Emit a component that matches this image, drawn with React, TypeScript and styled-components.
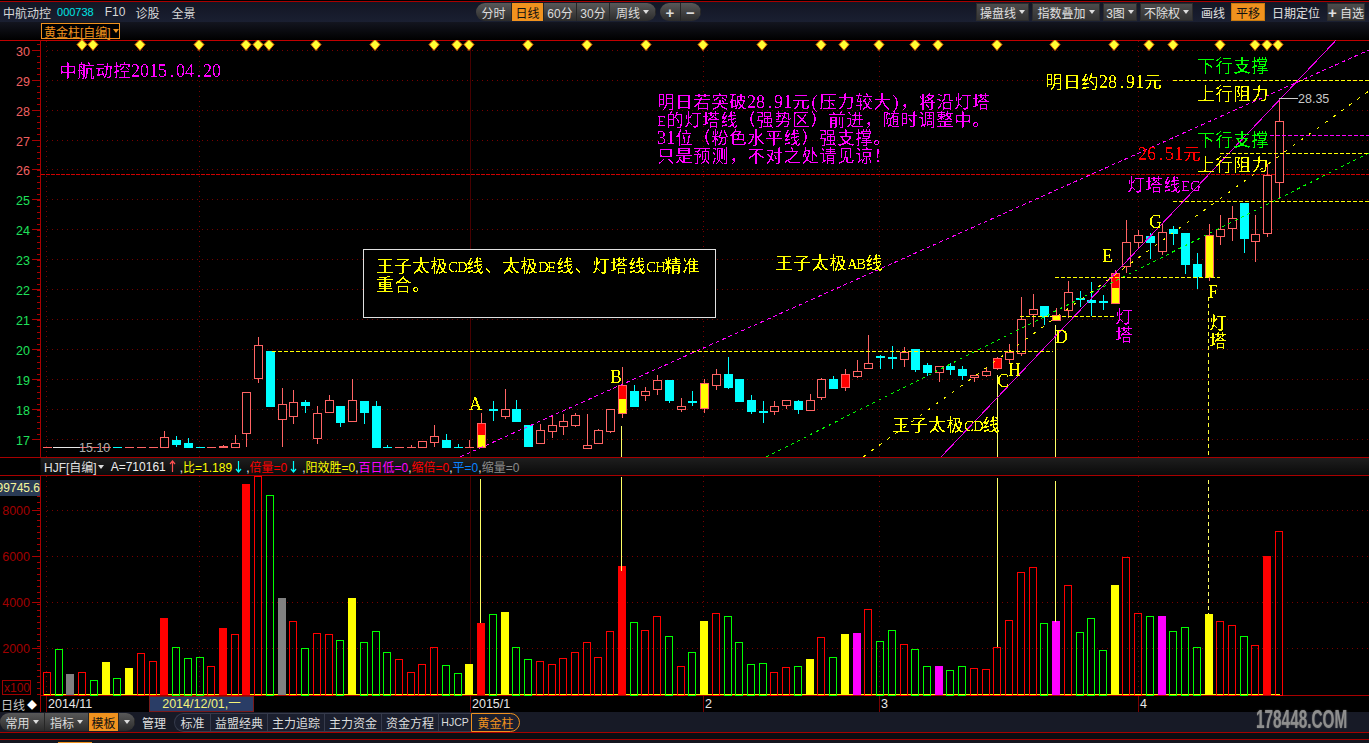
import styled, { createGlobalStyle } from 'styled-components'

const UI_FONT = '"Liberation Sans", "Noto Sans CJK SC", sans-serif'
const RULE = '#a80000'

const GlobalStyle = createGlobalStyle`
  html, body {
    margin: 0;
    padding: 0;
    background: #000;
  }
  body {
    font-family: ${UI_FONT};
    font-size: 12px;
  }
`

const Page = styled.div`
  position: relative;
  display: flex;
  flex-direction: column;
  width: 1369px;
  height: 743px;
  overflow: hidden;
  background: #000;
`

const TopRule = styled.div`
  height: 2px;
  box-sizing: border-box;
  border-bottom: 1px solid ${RULE};
`

const TopBar = styled.div`
  display: flex;
  align-items: center;
  height: 20px;
  background: linear-gradient(#121624, #1a1f31);
  color: #d8d8d8;
`

const StockInfo = styled.div`
  display: flex;
  align-items: center;
  flex: 0 0 476px;
  padding-left: 3px;
  box-sizing: border-box;
`

const InfoText = styled.span<{ $gap?: number; $cyan?: boolean }>`
  margin-left: ${(p) => p.$gap ?? 0}px;
  color: ${(p) => (p.$cyan ? '#00e5e5' : '#d8d8d8')};
  font-size: ${(p) => (p.$cyan ? 11 : 12)}px;
`

const Pill = styled.div<{ $left?: number }>`
  display: flex;
  height: 18px;
  margin-left: ${(p) => p.$left ?? 0}px;
  border-radius: 9px;
  overflow: hidden;
  background: linear-gradient(#585858, #2b2b2b);
`

const Segment = styled.div<{ $w: number; $active?: boolean }>`
  display: flex;
  align-items: center;
  justify-content: center;
  gap: 3px;
  width: ${(p) => p.$w}px;
  box-sizing: border-box;
  border-right: 1px solid #262626;
  background: ${(p) => (p.$active ? '#f0921e' : 'transparent')};
  color: ${(p) => (p.$active ? '#111' : '#dcdcdc')};
`

const BoldGlyph = styled.span`
  font-size: 15px;
  font-weight: bold;
  line-height: 1;
`

const Caret = styled.span`
  width: 0;
  height: 0;
  border-left: 3.5px solid transparent;
  border-right: 3.5px solid transparent;
  border-top: 4px solid #ddd;
`

const RightTools = styled.div`
  display: flex;
  align-items: center;
  margin-left: auto;
  padding-right: 4px;
`

const ToolButton = styled.div<{ $w: number; $left: number; $kind?: 'plain' | 'active' }>`
  display: flex;
  align-items: center;
  justify-content: center;
  gap: 3px;
  width: ${(p) => p.$w}px;
  height: 18px;
  margin-left: ${(p) => p.$left}px;
  box-sizing: border-box;
  white-space: nowrap;
  color: ${(p) => (p.$kind === 'active' ? '#111' : '#e0e0e0')};
  background: ${(p) =>
    p.$kind === 'active' ? '#f0921e' : p.$kind === 'plain' ? 'transparent' : 'linear-gradient(#4c4c4c, #333)'};
  border: 1px solid ${(p) => (p.$kind === 'plain' ? 'transparent' : p.$kind === 'active' ? '#c97a10' : '#2c2c2c')};
`

const SubBar = styled.div`
  height: 18px;
  padding-left: 41px;
  box-sizing: border-box;
  background: linear-gradient(#13151f, #000);
`

const FormulaTag = styled.div`
  display: inline-flex;
  align-items: center;
  gap: 2px;
  width: 79px;
  height: 16px;
  margin-top: 1px;
  padding-left: 2px;
  box-sizing: border-box;
  border: 1px solid #f0921e;
  background: #000;
  color: #f0921e;
  white-space: nowrap;
`

const OrangeCaret = styled(Caret)`
  border-top-color: #f0921e;
`

const ChartSvg = styled.svg`
  display: block;
  flex: none;
  shape-rendering: crispEdges;
`

const Note = styled.text`
  font-family: 'Noto Sans CJK SC', sans-serif;
  font-size: 17px;
`

const NoteRun = styled.tspan<{ $latin?: boolean; $small?: boolean }>`
  font-family: ${(p) => (p.$latin ? "'Liberation Serif', serif" : "'Noto Sans CJK SC', sans-serif")};
  font-size: ${(p) => (p.$small ? 15 : p.$latin ? 18 : 17)}px;
`

const AxisText = styled.text<{ $size?: number }>`
  font-family: 'Liberation Sans', sans-serif;
  font-size: ${(p) => p.$size ?? 12.5}px;
`

const LegendBar = styled.div`
  display: flex;
  align-items: center;
  height: 19px;
  box-sizing: border-box;
  padding-left: 44px;
  border-top: 1px solid ${RULE};
  border-bottom: 1px solid ${RULE};
  background: linear-gradient(90deg, #000 40px, transparent 41px), linear-gradient(#1e1e1e, #0a0a0a);
  white-space: nowrap;
  font-size: 12px;
`

const LegendText = styled.span<{ $color: string; $left?: number }>`
  margin-left: ${(p) => p.$left ?? 0}px;
  color: ${(p) => p.$color};
`

const Comma = styled.span`
  color: #eee;
`

const DateAxis = styled.div`
  position: relative;
  height: 16px;
  display: flex;
  align-items: center;
  background: #000;
  color: #e8e8e8;
  font-size: 12.5px;
`

const PeriodLabel = styled.div`
  display: flex;
  align-items: center;
  gap: 2px;
  width: 41px;
  height: 100%;
  padding-left: 1px;
  box-sizing: border-box;
  border-right: 1px solid ${RULE};
  color: #c8c8c8;
  font-size: 12px;
  white-space: nowrap;
`

const PeriodDot = styled.span`
  color: #fff;
  font-size: 10px;
`

const DateMark = styled.span<{ $x: number }>`
  position: absolute;
  top: 0;
  bottom: 0;
  left: ${(p) => p.$x}px;
  padding-left: 1px;
  border-left: 1px solid #7a0000;
  line-height: 16px;
`

const CrosshairDate = styled.div`
  position: absolute;
  top: 0;
  left: 149px;
  width: 105px;
  height: 16px;
  box-sizing: border-box;
  border: 1px solid #7a1a1a;
  background: #2a3d66;
  color: #f4f47a;
  text-align: center;
  line-height: 14px;
`

const TabsRow = styled.div`
  display: flex;
  align-items: center;
  height: 20px;
  background: #171a26;
  color: #e0e0e0;
`

const ManageLink = styled.span`
  margin-left: 7px;
`

const TabGroup = styled.div`
  display: flex;
  height: 19px;
  margin-left: 8px;
`

const Tab = styled.div<{ $w: number; $first?: boolean; $active?: boolean; $small?: boolean }>`
  display: flex;
  align-items: center;
  justify-content: center;
  width: ${(p) => p.$w}px;
  box-sizing: border-box;
  border: 1px solid ${(p) => (p.$active ? '#f0921e' : '#363b4c')};
  border-right-width: ${(p) => (p.$active ? 1 : 0)}px;
  border-radius: ${(p) => (p.$first ? '10px 0 0 10px' : p.$active ? '0 10px 10px 0' : '0')};
  background: #1b1f2e;
  color: ${(p) => (p.$active ? '#f0921e' : '#dcdcdc')};
  font-size: ${(p) => (p.$small ? 10.5 : 12)}px;
`

const HairRule = styled.div`
  height: 1px;
  background: ${RULE};
`

const Gap = styled.div`
  height: 6px;
  background: #0c0d12;
`

const BottomStrip = styled.div`
  display: flex;
  align-items: flex-end;
  height: 3px;
  padding-left: 58px;
  background: #14161f;
`

const BottomTag = styled.div`
  width: 34px;
  height: 1px;
  background: #f0921e;
`

const Watermark = styled.div`
  position: absolute;
  left: 1256px;
  top: 704px;
  transform: scaleX(0.59);
  transform-origin: left top;
  color: #8e8e8e;
  font: bold 26px 'Liberation Sans', sans-serif;
  white-space: nowrap;
  text-shadow: 0 0 2px #666;
`

const barX = (i: number) => Math.round(47 + 11.733 * i)
const GRID_X = [46.5, 199.5, 703.5, 879.5, 1138.5]
const priceY = (v: number) => Math.floor(349.3 + (20 - v) * 29.9) + 0.5

// [kind, top, bottom, high, low]  u hollow, d cyan, f red filled, s red/yellow, y yellow, o tiny yellow
type Candle = [string, number, number, number?, number?]
const candles: Candle[] = [
  ['u', 447, 447], ['w', 447, 447], ['w', 447, 447], ['u', 447, 447], ['u', 447, 447], ['u', 447, 447],
  ['d', 447, 447], ['u', 447, 447], ['u', 447, 447], ['u', 447, 447],
  ['u', 437, 447, 431, 447], ['d', 440, 445, 436, 447], ['d', 443, 448, 438, 448], ['d', 447, 447], ['u', 447, 447],
  ['u', 446, 447, 445, 447], ['u', 443, 447, 435, 447], ['u', 392, 433, 392, 447], ['u', 345, 378, 337, 383],
  ['d', 351, 407], ['u', 404, 419, 388, 447], ['u', 402, 416, 390, 424], ['d', 402, 406, 400, 413],
  ['u', 413, 438, 406, 444], ['u', 400, 412, 395, 412], ['d', 406, 423, 406, 427], ['u', 400, 421, 379, 421],
  ['d', 401, 413, 401, 424], ['d', 406, 448, 401, 448], ['d', 447, 447, 445, 447], ['u', 447, 447],
  ['u', 447, 447, 445, 447], ['u', 441, 447, 441, 447], ['u', 436, 442, 425, 447], ['d', 440, 448, 434, 448],
  ['d', 447, 447, 444, 447], ['u', 447, 447, 440, 447], ['s', 423, 447, 413, 447], ['d', 409, 411, 401, 421],
  ['u', 409, 416, 389, 419], ['d', 409, 422, 400, 422], ['d', 425, 447], ['u', 430, 443, 424, 443],
  ['u', 425, 431, 416, 438], ['u', 421, 426, 414, 435], ['u', 415, 425, 413, 427], ['u', 445, 448, 414, 448],
  ['u', 430, 443, 429, 443], ['u', 409, 431, 409, 433], ['s', 385, 413, 367, 418], ['d', 391, 407, 385, 407],
  ['u', 391, 395, 387, 401], ['u', 380, 389, 375, 395], ['d', 380, 401, 380, 403], ['u', 406, 409, 398, 412],
  ['d', 401, 403, 391, 406], ['y', 383, 408, 379, 413], ['u', 374, 385, 369, 390], ['d', 374, 388, 357, 389],
  ['d', 379, 402], ['d', 400, 412, 395, 414], ['d', 411, 413, 401, 423], ['u', 406, 411, 401, 415],
  ['u', 400, 405, 400, 409], ['d', 401, 410, 400, 414], ['u', 400, 410, 394, 410], ['u', 379, 397, 378, 400],
  ['d', 379, 389, 376, 389], ['f', 374, 387, 369, 391], ['u', 371, 376, 360, 378], ['u', 363, 368, 335, 368],
  ['d', 356, 358, 355, 369], ['d', 357, 359, 346, 369], ['u', 352, 359, 347, 367], ['d', 349, 370, 349, 372],
  ['d', 365, 373, 363, 376], ['u', 366, 372, 366, 382], ['d', 366, 370, 363, 375], ['d', 369, 376, 366, 380],
  ['u', 375, 377, 375, 382], ['u', 371, 375, 368, 377], ['f', 358, 368, 357, 370], ['u', 352, 359, 344, 363],
  ['u', 319, 353, 297, 356], ['u', 309, 314, 294, 327], ['d', 306, 317, 306, 325], ['o', 315, 320, 308, 320],
  ['u', 292, 310, 281, 318], ['d', 298, 300, 291, 307], ['d', 300, 303, 282, 316], ['d', 301, 303, 295, 310],
  ['s', 273, 303, 270, 304], ['u', 242, 266, 220, 273], ['u', 235, 242, 230, 249], ['d', 236, 243, 233, 259],
  ['u', 232, 251, 224, 255], ['d', 229, 234, 226, 245], ['d', 233, 265, 233, 274], ['d', 264, 277, 253, 289],
  ['y', 235, 277, 224, 281], ['u', 229, 236, 215, 245], ['u', 218, 228, 206, 241], ['d', 203, 239, 203, 253],
  ['u', 234, 241, 215, 262], ['u', 175, 233, 164, 237], ['u', 121, 182, 98, 198],
]

const PINK = '#ff00ff'
const SALMON = '#ff6464'

const CandleMark = ({ data, x }: { data: Candle; x: number }) => {
  const [kind, top, bottom, hi = top, lo = bottom] = data
  const cx = x + 0.5
  const filled = kind === 'd'
  const line = filled ? '#00ffff' : kind === 'w' ? '#e8e8e8' : SALMON
  if (kind === 'w') return <line x1={x - 6} x2={x + 6} y1={top + 0.5} y2={top + 0.5} stroke={line} />
  const wick = <line x1={cx} x2={cx} y1={hi} y2={lo} stroke={line} />
  if (filled) {
    return (
      <>
        {wick}
        <rect x={x - 4} y={top} width={9} height={Math.max(bottom - top, 1)} fill="#00ffff" />
      </>
    )
  }
  if (top === bottom) {
    return (
      <>
        {wick}
        <line x1={x - 4} x2={x + 5} y1={top + 0.5} y2={top + 0.5} stroke={line} />
      </>
    )
  }
  const split = (top + bottom) / 2
  return (
    <>
      {wick}
      <rect
        x={x - 3.5}
        y={top + 0.5}
        width={8}
        height={bottom - top}
        fill={kind === 'f' ? '#ff0000' : kind === 'y' || kind === 'o' ? '#ffff00' : '#000'}
        stroke={line}
      />
      {kind === 's' && (
        <>
          <rect x={x - 3} y={top + 1} width={7} height={split - top - 1} fill="#ff0000" />
          <rect x={x - 3} y={split} width={7} height={bottom - split} fill="#ffff00" />
        </>
      )}
    </>
  )
}

// the chart writes in a fixed SimSun grid: ascii takes half a cell, the rest a full one
const ChartNote = ({ x, y, color, children }: { x: number; y: number; color: string; children: string }) => {
  let pen = x
  const runs = children.match(/[A-Za-z]+|[0-9.()!,]+|[^\x20-\x7e]+/g) ?? []
  return (
    <Note y={y} fill={color}>
      {runs.map((run, i) => {
        const latin = /^[\x20-\x7e]/.test(run)
        const xs = Array.from(run).map((ch) => {
          const at = pen + (ch === '.' ? 2.5 : ch === '(' || ch === ')' ? 1.5 : latin ? 0 : 0.5)
          pen += latin ? 9 : 18
          return at
        })
        return (
          <NoteRun key={i} x={xs.join(' ')} $latin={latin} $small={/^[A-Za-z]/.test(run) && run !== children}>
            {run}
          </NoteRun>
        )
      })}
    </Note>
  )
}

const DIAMONDS = [
  82, 93, 140, 199, 246, 258, 269, 316, 375, 434, 457, 469, 528, 587, 646, 703, 762, 821, 844, 879, 915, 938, 997,
  1055, 1114, 1149, 1173, 1220, 1255, 1267, 1278,
]

const GOLD = '#ffff00'
const NOTES: [number, number, string, string][] = [
  [59, 77, PINK, '中航动控2015.04.20'],
  [657, 108, PINK, '明日若突破28.91元(压力较大)，将沿灯塔'],
  [657, 126, PINK, 'E的灯塔线（强势区）前进，随时调整中。'],
  [657, 144, PINK, '31位（粉色水平线）强支撑。'],
  [657, 162, PINK, '只是预测，不对之处请见谅！'],
  [376, 272, GOLD, '王子太极CD线、太极DE线、灯塔线CH精准'],
  [376, 291, GOLD, '重合。'],
  [775, 269, GOLD, '王子太极AB线'],
  [892, 431, GOLD, '王子太极CD线'],
  [1045, 88, GOLD, '明日约28.91元'],
  [1197, 72, '#00ff00', '下行支撑'],
  [1197, 100, GOLD, '上行阻力'],
  [1197, 146, '#00ff00', '下行支撑'],
  [1197, 171, GOLD, '上行阻力'],
  [1138, 160, '#ff0000', '26.51元'],
  [1127, 191, PINK, '灯塔线EG'],
  [469, 410, GOLD, 'A'],
  [610, 383, GOLD, 'B'],
  [997, 387, GOLD, 'C'],
  [1055, 343, GOLD, 'D'],
  [1102, 262, GOLD, 'E'],
  [1208, 298, GOLD, 'F'],
  [1149, 228, GOLD, 'G'],
  [1008, 376, GOLD, 'H'],
  [1115, 323, PINK, '灯'],
  [1115, 341, PINK, '塔'],
  [1209, 329, GOLD, '灯'],
  [1209, 347, GOLD, '塔'],
]

const LEVELS: [number, number, number, string][] = [
  [272, 1053, 351.5, GOLD],
  [1020, 1115, 316.5, GOLD],
  [1055, 1220, 277.5, GOLD],
  [1173, 1369, 201.5, GOLD],
  [1220, 1369, 153.5, GOLD],
  [1173, 1369, 80.5, GOLD],
  [1270, 1369, 135.5, PINK],
]

const PriceChart = () => {
  const ticks = Array.from({ length: 14 }, (_, i) => 30 - i)
  const minors = Array.from({ length: 66 }, (_, i) => 44 + i * 6)
  return (
    <ChartSvg width={1369} height={417} viewBox="0 40 1369 417">
      <defs>
        {/* hard alpha cut, the original text is not antialiased */}
        <filter id="aliased" colorInterpolationFilters="sRGB">
          <feComponentTransfer>
            <feFuncA type="discrete" tableValues="0 0 1 1" />
          </feComponentTransfer>
        </filter>
      </defs>
      <line x1={0} x2={1369} y1={40.5} y2={40.5} stroke="#c00000" />
      {ticks.map((v) => (
        <line key={v} x1={47} x2={1369} y1={priceY(v)} y2={priceY(v)} stroke="#7a0000" strokeDasharray="1 4" />
      ))}
      {GRID_X.map((x) => (
        <line key={x} x1={x} x2={x} y1={41} y2={457} stroke="#7a0000" strokeDasharray="1 4" />
      ))}
      <line x1={470.5} x2={470.5} y1={41} y2={457} stroke="#460000" />
      <line x1={41} x2={1369} y1={174.5} y2={174.5} stroke="#d00000" strokeDasharray="4 1" />
      <line x1={40.5} x2={40.5} y1={40} y2={457} stroke={RULE} />
      {minors.map((y) => (
        <line key={y} x1={37} x2={40} y1={y + 0.5} y2={y + 0.5} stroke={RULE} />
      ))}
      {ticks.map((v) => (
        <g key={v}>
          <line x1={32} x2={40} y1={priceY(v)} y2={priceY(v)} stroke={RULE} />
          <AxisText x={30} y={priceY(v) + 5} textAnchor="end" fill={v > 25 ? '#f06060' : '#1fe05a'}>
            {v}
          </AxisText>
        </g>
      ))}
      {DIAMONDS.map((x) => (
        <polygon
          key={x}
          points={`${x - 5},44.5 ${x},39.5 ${x + 5},44.5 ${x},50.5`}
          fill="#ffff33"
          stroke="#e06000"
          shapeRendering="auto"
        />
      ))}
      {candles.map((c, i) => (
        <CandleMark key={i} data={c} x={barX(i)} />
      ))}
      <line x1={621.5} x2={621.5} y1={426} y2={457} stroke="#ffff66" />
      <line x1={997.5} x2={997.5} y1={375} y2={457} stroke="#ffff66" />
      <line x1={1055.5} x2={1055.5} y1={325} y2={457} stroke="#ffff66" />
      <line x1={1208.5} x2={1208.5} y1={297} y2={455} stroke="#ffff33" strokeDasharray="4 3" />
      <line x1={460} y1={457} x2={1369} y2={50} stroke={PINK} strokeDasharray="4 3" />
      <line x1={766} y1={457} x2={1369} y2={153} stroke="#00ff00" strokeDasharray="3 4" />
      <line x1={863} y1={457} x2={1369} y2={91} stroke={GOLD} strokeDasharray="3 7" />
      <line x1={941} y1={457} x2={1340} y2={36} stroke="#e800e8" />
      {LEVELS.map(([x1, x2, y, color]) => (
        <line key={`${x1}-${y}`} x1={x1} x2={x2} y1={y} y2={y} stroke={color} strokeDasharray="4 2" />
      ))}
      <rect x={363.5} y={249.5} width={352} height={68} fill="#000" stroke="#e0e0e0" />
      <g filter="url(#aliased)">
        {NOTES.map(([x, y, color, text]) => (
          <ChartNote key={`${x}-${y}`} x={x} y={y} color={color}>
            {text}
          </ChartNote>
        ))}
      </g>
      <line x1={54} x2={80} y1={447.5} y2={447.5} stroke="#e8e8e8" />
      <AxisText x={79} y={452} fill="#b0b0b0">
        15.10
      </AxisText>
      <line x1={1279} x2={1298} y1={98.5} y2={98.5} stroke="#d0d0d0" />
      <AxisText x={1298} y={103} fill="#c8c8c8">
        28.35
      </AxisText>
    </ChartSvg>
  )
}

const VOLUME_KINDS =
  'rgGrgYgYrrRgggrRrRrgGrgrrgYgggrrrrggYRgYggrrrrrrrRgrrgrgYrggggrrgYrgYMrggrggMggrrrrrrgMrgggYrrgMgggYrrgrRr'
const VOLUME_HEIGHTS = [
  23, 46, 21, 23, 15, 33, 17, 27, 42, 34, 77, 48, 37, 38, 29, 67, 61, 211, 219, 200, 97, 74, 47, 62, 61, 55, 97, 53,
  64, 43, 36, 23, 31, 48, 30, 22, 31, 72, 81, 83, 48, 36, 34, 31, 37, 43, 53, 38, 64, 129, 73, 65, 79, 59, 29, 43, 74,
  82, 79, 53, 31, 32, 23, 28, 29, 36, 58, 38, 61, 62, 86, 54, 65, 51, 46, 29, 29, 25, 29, 27, 26, 48, 75, 123, 128,
  72, 74, 110, 63, 77, 45, 110, 138, 82, 79, 79, 64, 68, 48, 81, 74, 70, 59, 50, 139, 164,
]
const VOLUME_FILL: Record<string, string> = { R: '#ff0000', Y: '#ffff00', M: '#ff00ff', G: '#808080' }
const VOLUME_BASE = 695
const MARKERS: [number, number, number, boolean?][] = [
  [480.5, 479, 623],
  [621.5, 477, 571],
  [997.5, 478, 647],
  [1055.5, 481, 622],
  [1208.5, 480, 614, true],
]

const VolumeChart = () => (
  <ChartSvg width={1369} height={220} viewBox="0 476 1369 220">
    {[8000, 6000, 4000, 2000].map((v, i) => (
      <g key={v}>
        <line x1={47} x2={1369} y1={510.5 + i * 46} y2={510.5 + i * 46} stroke="#7a0000" strokeDasharray="1 4" />
        <line x1={32} x2={40} y1={510.5 + i * 46} y2={510.5 + i * 46} stroke={RULE} />
        <AxisText x={30} y={515 + i * 46} textAnchor="end" fill="#a00000">
          {v}
        </AxisText>
      </g>
    ))}
    {Array.from({ length: 36 }, (_, i) => (
      <line key={i} x1={37} x2={40} y1={484.5 + i * 6} y2={484.5 + i * 6} stroke={RULE} />
    ))}
    {GRID_X.map((x) => (
      <line key={x} x1={x} x2={x} y1={476} y2={695} stroke="#7a0000" strokeDasharray="1 4" />
    ))}
    <line x1={470.5} x2={470.5} y1={476} y2={695} stroke="#460000" />
    <line x1={40.5} x2={40.5} y1={476} y2={696} stroke={RULE} />
    <rect x={0} y={480} width={40} height={16} fill="#2a3a55" />
    <AxisText x={40} y={492} textAnchor="end" fill="#f6f69a" $size={12}>
      99745.6
    </AxisText>
    <rect x={2.5} y={680.5} width={28} height={14} fill="#000" stroke="#a00000" />
    <AxisText x={4} y={692} fill="#a00000" $size={12}>
      x100
    </AxisText>
    <line x1={41} x2={1369} y1={695.5} y2={695.5} stroke={RULE} />
    <line x1={43} x2={1280} y1={694.5} y2={694.5} stroke="#ffff00" />
    {VOLUME_HEIGHTS.map((h, i) => {
      const kind = VOLUME_KINDS[i]
      const x = barX(i) - 4
      const fill = VOLUME_FILL[kind]
      return fill ? (
        <rect key={i} x={x} y={VOLUME_BASE - h} width={8} height={h} fill={fill} />
      ) : (
        <rect
          key={i}
          x={x + 0.5}
          y={VOLUME_BASE - h + 0.5}
          width={7}
          height={h}
          fill="none"
          stroke={kind === 'r' ? '#ff0000' : '#00ff00'}
        />
      )
    })}
    {MARKERS.map(([x, y1, y2, dashed]) => (
      <line
        key={x}
        x1={x}
        x2={x}
        y1={y1}
        y2={y2}
        stroke="#ffff66"
        strokeDasharray={dashed ? '4 3' : undefined}
      />
    ))}
  </ChartSvg>
)

const LegendArrow = ({ up }: { up?: boolean }) => (
  <svg width={7} height={13} viewBox="0 0 7 13" style={{ marginLeft: 3 }}>
    <path
      d={up ? 'M3.5 1 L3.5 12 M1 4 L3.5 1 L6 4' : 'M3.5 1 L3.5 12 M1 9 L3.5 12 L6 9'}
      fill="none"
      stroke={up ? '#ff5050' : '#00ffff'}
      strokeWidth={1.2}
    />
  </svg>
)

const IndicatorLegend = () => (
  <LegendBar>
    <LegendText $color="#e0e0e0">HJF[自编]</LegendText>
    <Caret style={{ marginLeft: 1 }} />
    <LegendText $color="#eeeeee" $left={7}>
      A=710161
    </LegendText>
    <LegendArrow up />
    <LegendText $color="#ffff00" $left={4}>
      <Comma>,</Comma>比=1.189
    </LegendText>
    <LegendArrow />
    <LegendText $color="#ff0000" $left={4}>
      <Comma>,</Comma>倍量=0
    </LegendText>
    <LegendArrow />
    <LegendText $color="#ffff00" $left={5}>
      <Comma>,</Comma>阳效胜=0
    </LegendText>
    <LegendText $color="#ff00ff">
      <Comma>,</Comma>百日低=0
    </LegendText>
    <LegendText $color="#ff0000">
      <Comma>,</Comma>缩倍=0
    </LegendText>
    <LegendText $color="#0a84ff">
      <Comma>,</Comma>平=0
    </LegendText>
    <LegendText $color="#8a8a8a">
      <Comma>,</Comma>缩量=0
    </LegendText>
  </LegendBar>
)

export default function App() {
  return (
    <Page>
      <GlobalStyle />
      <TopRule />
      <TopBar>
        <StockInfo>
          <InfoText>中航动控</InfoText>
          <InfoText $gap={6} $cyan>
            000738
          </InfoText>
          <InfoText $gap={11}>F10</InfoText>
          <InfoText $gap={10}>诊股</InfoText>
          <InfoText $gap={12}>全景</InfoText>
        </StockInfo>
        <Pill>
          <Segment $w={36}>分时</Segment>
          <Segment $w={32} $active>
            日线
          </Segment>
          <Segment $w={33}>60分</Segment>
          <Segment $w={33}>30分</Segment>
          <Segment $w={46}>
            周线
            <Caret />
          </Segment>
        </Pill>
        <Pill $left={4}>
          <Segment $w={21}>
            <BoldGlyph>+</BoldGlyph>
          </Segment>
          <Segment $w={20}>
            <BoldGlyph>−</BoldGlyph>
          </Segment>
        </Pill>
        <RightTools>
          <ToolButton $w={53} $left={0}>
            操盘线
            <Caret />
          </ToolButton>
          <ToolButton $w={68} $left={3}>
            指数叠加
            <Caret />
          </ToolButton>
          <ToolButton $w={34} $left={3}>
            3图
            <Caret />
          </ToolButton>
          <ToolButton $w={53} $left={3}>
            不除权
            <Caret />
          </ToolButton>
          <ToolButton $w={24} $left={8} $kind="plain">
            画线
          </ToolButton>
          <ToolButton $w={34} $left={6} $kind="active">
            平移
          </ToolButton>
          <ToolButton $w={48} $left={7} $kind="plain">
            日期定位
          </ToolButton>
          <ToolButton $w={38} $left={7}>
            <BoldGlyph>+</BoldGlyph>自选
          </ToolButton>
        </RightTools>
      </TopBar>
      <SubBar>
        <FormulaTag>
          黄金柱[自编]
          <OrangeCaret />
        </FormulaTag>
      </SubBar>
      <PriceChart />
      <IndicatorLegend />
      <VolumeChart />
      <DateAxis>
        <PeriodLabel>
          日线
          <PeriodDot>◆</PeriodDot>
        </PeriodLabel>
        <DateMark $x={46}>2014/11</DateMark>
        <DateMark $x={470}>2015/1</DateMark>
        <DateMark $x={703}>2</DateMark>
        <DateMark $x={879}>3</DateMark>
        <DateMark $x={1138}>4</DateMark>
        <CrosshairDate>2014/12/01,一</CrosshairDate>
      </DateAxis>
      <TabsRow>
        <Pill>
          <Segment $w={45}>
            常用
            <Caret />
          </Segment>
          <Segment $w={44}>
            指标
            <Caret />
          </Segment>
          <Segment $w={30} $active>
            模板
          </Segment>
          <Segment $w={16}>
            <Caret />
          </Segment>
        </Pill>
        <ManageLink>管理</ManageLink>
        <TabGroup>
          <Tab $w={36} $first>
            标准
          </Tab>
          <Tab $w={57}>益盟经典</Tab>
          <Tab $w={57}>主力追踪</Tab>
          <Tab $w={57}>主力资金</Tab>
          <Tab $w={57}>资金方程</Tab>
          <Tab $w={33} $small>
            HJCP
          </Tab>
          <Tab $w={49} $active>
            黄金柱
          </Tab>
        </TabGroup>
      </TabsRow>
      <HairRule />
      <Gap />
      <HairRule />
      <BottomStrip>
        <BottomTag />
      </BottomStrip>
      <Watermark>178448.COM</Watermark>
    </Page>
  )
}
